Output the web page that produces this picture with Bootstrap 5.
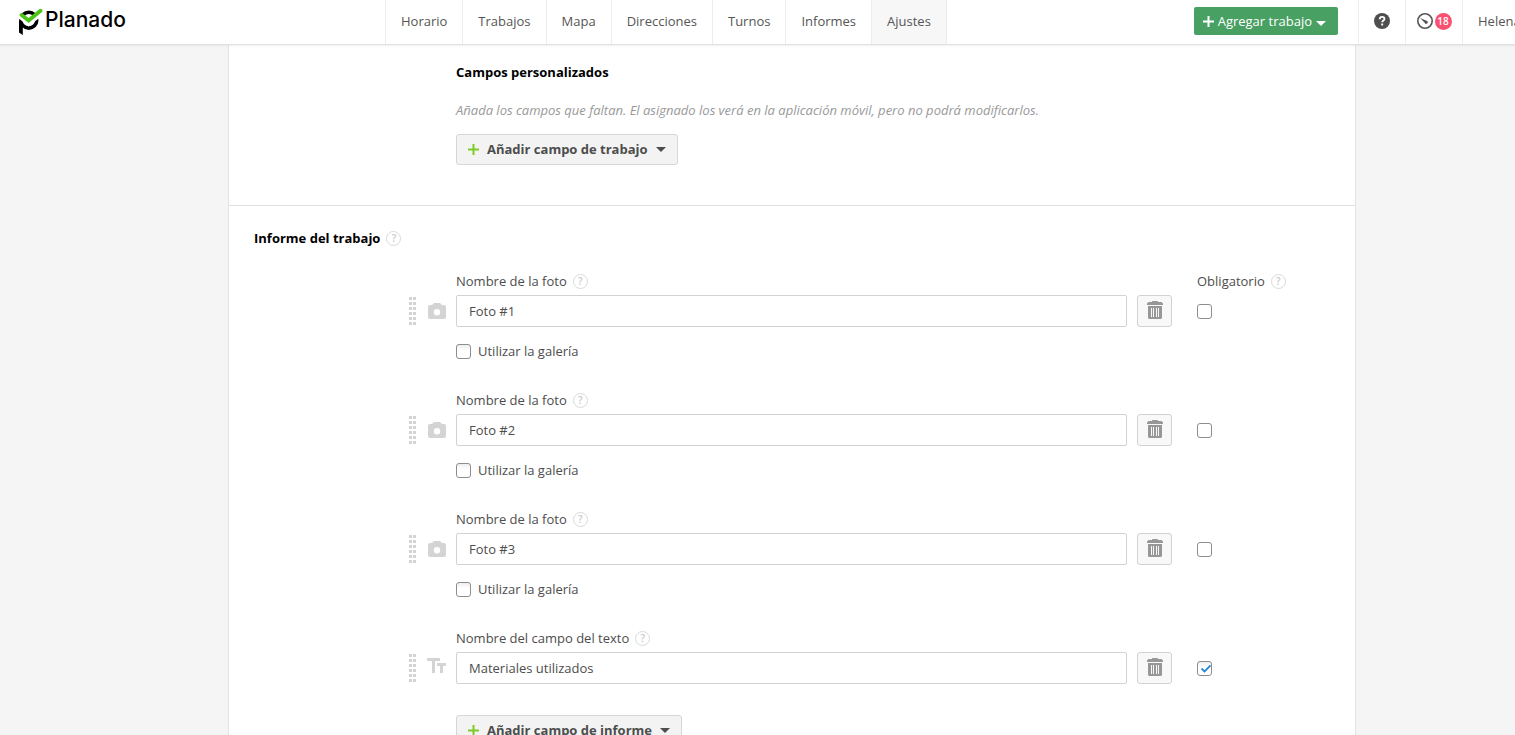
<!DOCTYPE html>
<html lang="es">
<head>
<meta charset="utf-8">
<meta name="viewport" content="width=device-width, initial-scale=1">
<title>Planado</title>
<link href="https://cdn.jsdelivr.net/npm/bootstrap@5.3.0/dist/css/bootstrap.min.css" rel="stylesheet">
<style>
body{font:13px/20px "Open Sans",sans-serif;color:#4d4d4d;background:#f5f5f5}
.topbar{height:45px;background:#fff;border-bottom:1px solid #e0e0e0;box-shadow:0 1px 2px rgba(0,0,0,.06);z-index:2}
.brand-area{width:385px;padding:8px 0 0 18px;color:#000;text-decoration:none}
.wordmark{font:500 21px/24px Inter,sans-serif;margin-left:2px}
.topbar .nav-link{color:#555;padding:11px 15px 13px;border-left:1px solid #ededed;height:44px}
.topbar .nav-item:last-child .nav-link{border-right:1px solid #ededed}
.topbar .nav-link.active{background:#f7f7f7}
.btn-add{--bs-btn-color:#fff;--bs-btn-bg:#48a062;--bs-btn-hover-color:#fff;--bs-btn-hover-bg:#3e8f56;font-size:13px;line-height:20px;height:28px;padding:0 12px 0 9px;border:0;border-radius:2px;margin:7px 20px 0 0}
.tool{height:44px;border:0;border-left:1px solid #ededed;background:none;padding:0 0 2px;color:#555}
.tool-help{width:47px}.tool-alerts{width:57px}
.tool-user{width:53px;padding:11px 0 13px 15px;text-decoration:none;white-space:nowrap}
.count-pill{background:#f9506f;width:17px;height:17px;padding:0;font:600 10px/17px "Open Sans",sans-serif;margin-left:2px}
.sheet{margin:0 159px 0 228px;background:#fff;border:solid #e3e3e3;border-width:0 1px}
.custom-fields{padding:17px 24px 40px 227px;border-bottom:1px solid #e0e0e0}
.report{padding-top:22px}
.report-title{padding-left:25px;margin-bottom:23px}
h2{font-size:13px;line-height:20px;font-weight:700;color:#000;margin:0}
.hint{color:#999;margin:18px 0 14px}
.btn-field{--bs-btn-color:#4d4d4d;--bs-btn-bg:#f3f3f3;--bs-btn-border-color:#d6d6d6;--bs-btn-hover-color:#333;--bs-btn-hover-bg:#eaeaea;--bs-btn-hover-border-color:#ccc;font-size:13px;font-weight:700;line-height:19px;padding:5px 11px;border-radius:3px}
.help-dot{width:15px;height:15px;border:1px solid #dadada;border-radius:50%;background:#fff;color:#cacaca;padding:0;font:600 10px/13px "Open Sans",sans-serif;margin-left:6px}
.field-block{margin-bottom:29px}
.lead-in{padding-left:227px}
.markers{width:227px;padding:0 10px 0 180px;color:#d4d4d4}
.required-col{width:158px}
.field-line{margin:4px 0 14px}
.field-line .form-control{height:32px;padding:5px 12px;font-size:13px;line-height:20px;color:#4d4d4d;border-color:#d2d2d2;border-radius:2px}
.btn-trash{--bs-btn-bg:#f8f8f8;--bs-btn-border-color:#d2d2d2;--bs-btn-hover-bg:#eee;width:35px;height:32px;padding:0 0 2px;border-radius:3px;margin:0 25px 0 10px}
.btn-trash svg{color:#979797}
.form-check-input.tick{width:15px;height:15px;margin:0;border:1px solid #8d8d8d;border-radius:3px;background-color:#fff}
.form-check-input.shaded{background-image:linear-gradient(#eee,#fff 5px)}
.form-check-input.tick:checked{border-color:#8d8d8d;background-color:#fff;background-repeat:no-repeat;background-size:13px;background-image:url("data:image/svg+xml,%3csvg xmlns='http://www.w3.org/2000/svg' viewBox='0 0 13 13'%3e%3cpath d='M3.5 6.5l3 3 6-6' fill='none' stroke='%232a86d8' stroke-width='1.8'/%3e%3c/svg%3e"),linear-gradient(#eee,#fff 5px)}
.gallery-label{margin-left:7px}
.last-block{margin-bottom:31px}
.last-block .field-line{margin-bottom:0}
</style>
</head>
<body class="vh-100 d-flex flex-column overflow-hidden">
<svg class="d-none" aria-hidden="true">
  <symbol id="grip" viewBox="0 0 7 28"><path fill="currentColor" d="M0 0h3v3H0zM4 0h3v3H4zM0 5h3v3H0zM4 5h3v3H4zM0 10h3v3H0zM4 10h3v3H4zM0 15h3v3H0zM4 15h3v3H4zM0 20h3v3H0zM4 20h3v3H4zM0 25h3v3H0zM4 25h3v3H4z"/></symbol>
  <symbol id="camera" viewBox="0 0 18 16"><path fill="currentColor" fill-rule="evenodd" d="M6 0h6l2 2h2a2 2 0 0 1 2 2v10a2 2 0 0 1-2 2H2a2 2 0 0 1-2-2V4a2 2 0 0 1 2-2h2zM9 6a3.200 3.200 0 1 0 0 6.400a3.200 3.200 0 0 0 0-6.400z"/></symbol>
  <symbol id="text-size" viewBox="0 0 19 16"><path fill="currentColor" d="M0 0h13v3H8v12H5V3H0zM10 5h9v3h-3v7h-3V8h-3z"/></symbol>
  <symbol id="trash" viewBox="0 0 16 18"><path fill="currentColor" fill-rule="evenodd" d="M5 1c0-.6.4-1 1-1h4c.6 0 1 .4 1 1h3.500L16 2.500V4H0V2.500L1.500 1zM1 5h14v11.500a1.500 1.500 0 0 1-1.500 1.500h-11A1.500 1.500 0 0 1 1 16.500zM4 7v9h1V7zM6 7v9h1V7zM9 7v9h1V7zM11 7v9h1V7z"/></symbol>
  <symbol id="plus" viewBox="0 0 11 11"><path d="M5.500 0v11M0 5.500h11" stroke="currentColor" stroke-width="2"/></symbol>
  <symbol id="caret" viewBox="0 0 10 5"><path fill="currentColor" d="M0 0h10L5 5z"/></symbol>
</svg>

<header class="topbar d-flex flex-shrink-0 position-relative">
  <a href="#" class="brand-area d-flex align-items-start flex-shrink-0" aria-label="Planado">
    <svg width="25" height="28" viewBox="0 0 25 28" aria-hidden="true">
      <path d="M1 12v12.500l3.800 2.500V18z" fill="#000"/>
      <circle cx="10.800" cy="12.200" r="7.900" fill="none" stroke="#000" stroke-width="3.600"/>
      <path d="M1.500 8l9 7.500L24 5" fill="none" stroke="#fff" stroke-width="4.500"/>
      <path d="M3.600 7l7 5.500L22.500 2.800" fill="none" stroke="#4cc417" stroke-width="3.900" stroke-linecap="round"/>
    </svg>
    <span class="wordmark">Planado</span>
  </a>
  <ul class="nav flex-nowrap">
    <li class="nav-item"><a class="nav-link" href="#">Horario</a></li>
    <li class="nav-item"><a class="nav-link" href="#">Trabajos</a></li>
    <li class="nav-item"><a class="nav-link" href="#">Mapa</a></li>
    <li class="nav-item"><a class="nav-link" href="#">Direcciones</a></li>
    <li class="nav-item"><a class="nav-link" href="#">Turnos</a></li>
    <li class="nav-item"><a class="nav-link" href="#">Informes</a></li>
    <li class="nav-item"><a class="nav-link active" aria-current="page" href="#">Ajustes</a></li>
  </ul>
  <div class="d-flex ms-auto flex-shrink-0">
    <button type="button" class="btn btn-add d-flex align-items-center">
      <svg width="11" height="11" class="me-1"><use href="#plus"/></svg>Agregar trabajo<svg width="10" height="5" class="ms-1 mt-1"><use href="#caret"/></svg>
    </button>
    <button type="button" class="tool tool-help d-flex align-items-center justify-content-center" aria-label="Ayuda">
      <svg width="16" height="16" viewBox="0 0 16 16"><circle cx="8" cy="8" r="8" fill="#4f4f4f"/><path d="M5.800 6.200c0-3.200 4.600-3 4.600-.3 0 1.700-2.200 1.500-2.200 3.300M8.200 10.500v2" fill="none" stroke="#fff" stroke-width="1.900"/></svg>
    </button>
    <button type="button" class="tool tool-alerts d-flex align-items-center justify-content-center" aria-label="Avisos: 18">
      <svg width="16" height="16" viewBox="0 0 16 16"><circle cx="8" cy="8" r="7.200" fill="none" stroke="#555" stroke-width="1.600"/><path d="M3 5l6.500 2.700a1.600 1.600 0 1 1-1.800 2z" fill="#555"/></svg>
      <span class="badge rounded-circle count-pill">18</span>
    </button>
    <a href="#" class="tool tool-user overflow-hidden">Helena</a>
  </div>
</header>

<main class="flex-grow-1 overflow-hidden">
  <div class="sheet">
    <section class="custom-fields">
      <h2>Campos personalizados</h2>
      <p class="hint fst-italic">Añada los campos que faltan. El asignado los verá en la aplicación móvil, pero no podrá modificarlos.</p>
      <button type="button" class="btn btn-field d-inline-flex align-items-center"><svg width="11" height="11" class="me-2" color="#7ccb2a"><use href="#plus"/></svg>Añadir campo de trabajo<svg width="10" height="5" class="ms-2"><use href="#caret"/></svg></button>
    </section>
    <section class="report">
      <div class="report-title d-flex align-items-center"><h2>Informe del trabajo</h2><button type="button" class="help-dot" aria-label="Ayuda">?</button></div>

      <div class="field-block">
        <div class="lead-in d-flex">
          <div class="flex-grow-1 d-flex align-items-center"><label for="f1">Nombre de la foto</label><button type="button" class="help-dot" aria-label="Ayuda">?</button></div>
          <div class="required-col d-flex align-items-center"><label for="r1">Obligatorio</label><button type="button" class="help-dot" aria-label="Ayuda">?</button></div>
        </div>
        <div class="field-line d-flex align-items-center">
          <div class="markers d-flex align-items-center flex-shrink-0"><svg width="7" height="28"><use href="#grip"/></svg><svg width="18" height="16" class="ms-auto"><use href="#camera"/></svg></div>
          <input id="f1" type="text" class="form-control" value="Foto #1">
          <button type="button" class="btn btn-trash d-flex align-items-center justify-content-center flex-shrink-0" aria-label="Eliminar"><svg width="16" height="18"><use href="#trash"/></svg></button>
          <div class="required-col d-flex flex-shrink-0"><input id="r1" type="checkbox" class="form-check-input tick"></div>
        </div>
        <div class="lead-in d-flex align-items-center"><input id="g1" type="checkbox" class="form-check-input tick shaded"><label for="g1" class="gallery-label">Utilizar la galería</label></div>
      </div>

      <div class="field-block">
        <div class="lead-in d-flex align-items-center"><label for="f2">Nombre de la foto</label><button type="button" class="help-dot" aria-label="Ayuda">?</button></div>
        <div class="field-line d-flex align-items-center">
          <div class="markers d-flex align-items-center flex-shrink-0"><svg width="7" height="28"><use href="#grip"/></svg><svg width="18" height="16" class="ms-auto"><use href="#camera"/></svg></div>
          <input id="f2" type="text" class="form-control" value="Foto #2">
          <button type="button" class="btn btn-trash d-flex align-items-center justify-content-center flex-shrink-0" aria-label="Eliminar"><svg width="16" height="18"><use href="#trash"/></svg></button>
          <div class="required-col d-flex flex-shrink-0"><input type="checkbox" class="form-check-input tick" aria-label="Obligatorio"></div>
        </div>
        <div class="lead-in d-flex align-items-center"><input id="g2" type="checkbox" class="form-check-input tick shaded"><label for="g2" class="gallery-label">Utilizar la galería</label></div>
      </div>

      <div class="field-block">
        <div class="lead-in d-flex align-items-center"><label for="f3">Nombre de la foto</label><button type="button" class="help-dot" aria-label="Ayuda">?</button></div>
        <div class="field-line d-flex align-items-center">
          <div class="markers d-flex align-items-center flex-shrink-0"><svg width="7" height="28"><use href="#grip"/></svg><svg width="18" height="16" class="ms-auto"><use href="#camera"/></svg></div>
          <input id="f3" type="text" class="form-control" value="Foto #3">
          <button type="button" class="btn btn-trash d-flex align-items-center justify-content-center flex-shrink-0" aria-label="Eliminar"><svg width="16" height="18"><use href="#trash"/></svg></button>
          <div class="required-col d-flex flex-shrink-0"><input type="checkbox" class="form-check-input tick" aria-label="Obligatorio"></div>
        </div>
        <div class="lead-in d-flex align-items-center"><input id="g3" type="checkbox" class="form-check-input tick shaded"><label for="g3" class="gallery-label">Utilizar la galería</label></div>
      </div>

      <div class="field-block last-block">
        <div class="lead-in d-flex align-items-center"><label for="f4">Nombre del campo del texto</label><button type="button" class="help-dot" aria-label="Ayuda">?</button></div>
        <div class="field-line d-flex align-items-center">
          <div class="markers d-flex align-items-center flex-shrink-0"><svg width="7" height="28"><use href="#grip"/></svg><svg width="19" height="16" class="ms-auto mb-1"><use href="#text-size"/></svg></div>
          <input id="f4" type="text" class="form-control" value="Materiales utilizados">
          <button type="button" class="btn btn-trash d-flex align-items-center justify-content-center flex-shrink-0" aria-label="Eliminar"><svg width="16" height="18"><use href="#trash"/></svg></button>
          <div class="required-col d-flex flex-shrink-0"><input type="checkbox" checked class="form-check-input tick" aria-label="Obligatorio"></div>
        </div>
      </div>

      <div class="lead-in"><button type="button" class="btn btn-field d-inline-flex align-items-center"><svg width="11" height="11" class="me-2" color="#7ccb2a"><use href="#plus"/></svg>Añadir campo de informe<svg width="10" height="5" class="ms-2"><use href="#caret"/></svg></button></div>
    </section>
  </div>
</main>
<script src="https://cdn.jsdelivr.net/npm/bootstrap@5.3.0/dist/js/bootstrap.bundle.min.js"></script>
</body>
</html>
